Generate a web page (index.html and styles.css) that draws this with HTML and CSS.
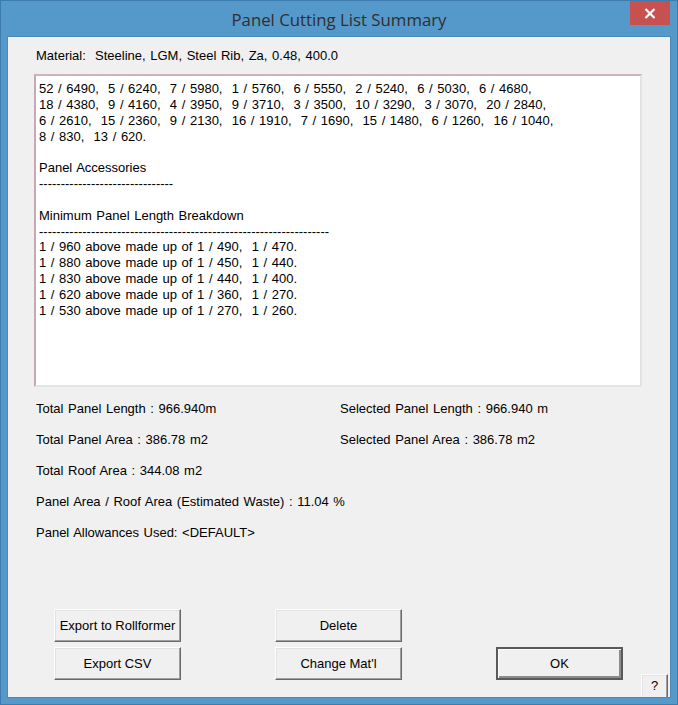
FILE: index.html
```html
<!DOCTYPE html>
<html lang="en">
<head>
    <meta charset="UTF-8">
    <title>Panel Cutting List Summary</title>
    <link rel="stylesheet" href="styles.css">
</head>
<body>
    <div class="window">
        <div class="titlebar">
            <span class="title">Panel Cutting List Summary</span>
            <button class="close" title="Close">
                <svg width="12" height="11" viewBox="0 0 12 11"><path d="M1.5 1 L10.5 10 M10.5 1 L1.5 10" stroke="#fff" stroke-width="2.2"/></svg>
            </button>
        </div>

        <div class="client">
            <div class="material">Material:  Steeline, LGM, Steel Rib, Za, 0.48, 400.0</div>

            <div class="listbox">52 / 6490,  5 / 6240,  7 / 5980,  1 / 5760,  6 / 5550,  2 / 5240,  6 / 5030,  6 / 4680,
18 / 4380,  9 / 4160,  4 / 3950,  9 / 3710,  3 / 3500,  10 / 3290,  3 / 3070,  20 / 2840,
6 / 2610,  15 / 2360,  9 / 2130,  16 / 1910,  7 / 1690,  15 / 1480,  6 / 1260,  16 / 1040,
8 / 830,  13 / 620.

Panel Accessories
-------------------------------

Minimum Panel Length Breakdown
-------------------------------------------------------------------
1 / 960 above made up of 1 / 490,  1 / 470.
1 / 880 above made up of 1 / 450,  1 / 440.
1 / 830 above made up of 1 / 440,  1 / 400.
1 / 620 above made up of 1 / 360,  1 / 270.
1 / 530 above made up of 1 / 270,  1 / 260.</div>

            <div class="stats">
                <span>Total Panel Length : 966.940m</span>
                <span>Selected Panel Length : 966.940 m</span>
                <span>Total Panel Area : 386.78 m2</span>
                <span>Selected Panel Area : 386.78 m2</span>
                <span class="wide">Total Roof Area : 344.08 m2</span>
                <span class="wide">Panel Area / Roof Area (Estimated Waste) : 11.04 %</span>
                <span class="wide">Panel Allowances Used: &lt;DEFAULT&gt;</span>
            </div>

            <div class="buttons">
                <button class="btn">Export to Rollformer</button>
                <button class="btn">Delete</button>
                <span></span>
                <button class="btn">Export CSV</button>
                <button class="btn">Change Mat'l</button>
                <button class="btn default">OK</button>
            </div>

            <button class="help">?</button>
        </div>
    </div>
</body>
</html>
```

FILE: styles.css
```css
body {
    margin: 0;
    background: #5598ca;
    font-family: "Liberation Sans", Arial, sans-serif;
    font-size: 13px;
    word-spacing: 1px;
    color: #000;
}
.window {
    box-sizing: border-box;
    width: 678px;
    height: 705px;
    background: #5598ca;
    border: 1px solid #3d7cad;
    display: flex;
    flex-direction: column;
}
.titlebar {
    position: relative;
    height: 36px;
    display: flex;
    align-items: center;
    justify-content: center;
}
.title {
    font-family: "Open Sans", "Noto Sans", sans-serif;
    font-size: 16.8px;
    word-spacing: 0;
    color: #2f2f2f;
}
.close {
    position: absolute;
    top: 0;
    right: 7px;
    width: 40px;
    height: 24px;
    border: none;
    padding: 0;
    background: #c75050;
    display: flex;
    align-items: center;
    justify-content: center;
}
.client {
    position: relative;
    flex: 1;
    margin: 0 7px 7px;
    background: #f0f0f0;
    box-shadow: 0 0 0 1px #4a8abb;
    overflow: hidden;
    display: flex;
    flex-direction: column;
    line-height: 16px;
}
.material {
    margin: 11px 0 0 28px;
    white-space: pre;
}
.listbox {
    box-sizing: border-box;
    margin: 10px 0 0 26px;
    width: 608px;
    height: 313px;
    padding: 5px 3px;
    background: #fff;
    border: 2px solid;
    border-color: #cdb3bd #e2e4e3 #e1e7e4 #c9a8b5;
    white-space: pre;
    line-height: 15.85px;
    overflow: hidden;
}
.stats {
    display: grid;
    grid-template-columns: 304px auto;
    row-gap: 15px;
    margin: 14px 0 0 28px;
}
.stats .wide {
    grid-column: 1 / 3;
}
.buttons {
    display: grid;
    grid-template-columns: repeat(3, 127px);
    grid-auto-rows: 33px;
    column-gap: 94px;
    row-gap: 5px;
    margin: 68px 0 0 46px;
}
.btn, .help {
    font-family: "Liberation Sans", Arial, sans-serif;
    font-size: 13px;
    word-spacing: 0;
    color: #000;
    background: #f0f0f0;
    border: 1px solid;
    border-color: #fdfdfd #696969 #696969 #fdfdfd;
    box-shadow: inset -1px -1px #a0a0a0, inset 1px 1px #e3e3e3;
    padding: 0;
}
.btn.default {
    border: 2px solid #5a5a5a;
    box-shadow: inset 1px 1px #fdfdfd, inset -2px -2px #8c8c8c;
}
.help {
    position: absolute;
    right: 2px;
    top: 637px;
    width: 27px;
    height: 26px;
    padding-bottom: 3px;
}
```
